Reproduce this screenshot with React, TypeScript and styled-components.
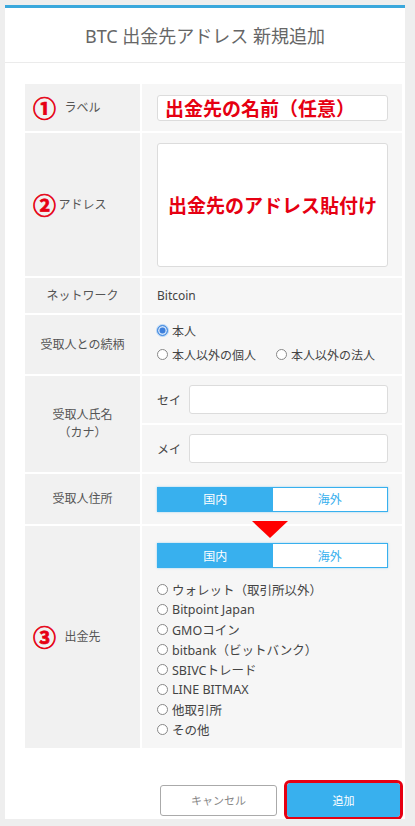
import styled, { createGlobalStyle } from "styled-components";

const GlobalStyle = createGlobalStyle`
    body {
        margin: 0;
        background: #eeeeee;
        font-family: "Noto Sans", "Noto Sans CJK JP", sans-serif;
    }
`;

const Modal = styled.div`
    width: 400px;
    margin: 5px 0 0 5px;
    background: #ffffff;
    border-top: 3px solid #3aa8dc;
    padding-bottom: 2px;
`;

const Header = styled.div`
    height: 54px;
    display: flex;
    align-items: center;
    justify-content: center;
    border-bottom: 1px solid #ebebeb;
    color: #666;
    font-size: 18px;
`;

const Table = styled.div`
    width: 377px;
    margin: 21px 0 0 20px;
    display: flex;
    flex-direction: column;
    gap: 2px;
`;

const Row = styled.div<{ $h: number }>`
    display: grid;
    grid-template-columns: 115px 260px;
    column-gap: 2px;
    height: ${(p) => p.$h}px;
`;

const LabelCell = styled.div`
    position: relative;
    background: #f1f1f1;
    display: flex;
    align-items: center;
    justify-content: center;
    text-align: center;
    color: #555;
    font-size: 12px;
    line-height: 18px;
`;

const Marker = styled.span`
    position: absolute;
    left: 8px;
    top: 50%;
    transform: translateY(-50%);
    color: #e60012;
    font-size: 23px;
    font-weight: 700;
    -webkit-text-stroke: 0.7px #e60012;
`;

const ValueCell = styled.div<{ $top?: boolean }>`
    position: relative;
    background: #f6f6f6;
    display: flex;
    flex-direction: column;
    justify-content: ${(p) => (p.$top ? "flex-start" : "center")};
    padding: 0 14px 0 15px;
    color: #444;
    font-size: 12px;
`;

const TextBox = styled.div<{ $h: number }>`
    height: ${(p) => p.$h}px;
    background: #fff;
    border: 1px solid #dcdcdc;
    border-radius: 3px;
    box-sizing: border-box;
    display: flex;
    align-items: center;
`;

const Hint = styled.span<{ $center?: boolean }>`
    flex: 1;
    text-align: ${(p) => (p.$center ? "center" : "left")};
    padding-left: ${(p) => (p.$center ? "0" : "7px")};
    color: #e60012;
    font-size: 19px;
    font-weight: 700;
    white-space: nowrap;
`;

const RadioLine = styled.div`
    display: flex;
    align-items: center;
    gap: 20px;
    height: 24px;
`;

const RadioItem = styled.label`
    display: flex;
    align-items: center;
    gap: 4px;
    color: #444;
    font-size: 12px;
    white-space: nowrap;
`;

const Dot = styled.span<{ $on?: boolean }>`
    width: 11px;
    height: 11px;
    border-radius: 50%;
    box-sizing: border-box;
    border: 1px solid ${(p) => (p.$on ? "#4a90e2" : "#888")};
    background: ${(p) => (p.$on ? "#3d7fdc" : "#fff")};
    box-shadow: ${(p) => (p.$on ? "inset 0 0 0 1.5px #cfe2f8, 0 0 0 1px #b9d6f5" : "none")};
`;

const NameCell = styled.div`
    display: grid;
    grid-template-rows: 1fr 1fr;
    row-gap: 2px;
    background: #fff;
`;

const NameRow = styled.div`
    background: #f6f6f6;
    display: flex;
    align-items: center;
    padding: 0 14px 0 15px;
    color: #444;
    font-size: 12px;
`;

const NameTag = styled.span`
    width: 32px;
`;

const Toggle = styled.div`
    display: grid;
    grid-template-columns: 1fr 1fr;
    height: 25px;
    border: 1px solid #38b0ee;
    box-sizing: border-box;
    box-shadow: 0 0 2px rgba(56, 176, 238, 0.5);
`;

const ToggleSide = styled.div<{ $on?: boolean }>`
    display: flex;
    align-items: center;
    justify-content: center;
    background: ${(p) => (p.$on ? "#38b0ee" : "#fff")};
    color: ${(p) => (p.$on ? "#fff" : "#38b0ee")};
    font-size: 12px;
`;

const Arrow = styled.span`
    position: absolute;
    top: -5px;
    left: 110px;
    width: 0;
    height: 0;
    border-left: 18px solid transparent;
    border-right: 18px solid transparent;
    border-top: 17px solid #f00;
`;

const DestList = styled.div`
    margin-top: 11px;
    display: flex;
    flex-direction: column;
`;

const DestItem = styled(RadioItem)`
    height: 20px;
    font-size: 12.5px;
`;

const Footer = styled.div`
    display: flex;
    justify-content: flex-end;
    align-items: center;
    gap: 10px;
    padding: 35px 5px 0 0;
`;

const Button = styled.button<{ $primary?: boolean }>`
    width: ${(p) => (p.$primary ? 113 : 117)}px;
    height: ${(p) => (p.$primary ? 34 : 31)}px;
    border-radius: 3px;
    border: 1px solid ${(p) => (p.$primary ? "#38b0ee" : "#aaa")};
    background: ${(p) => (p.$primary ? "#38b0ee" : "#fff")};
    color: ${(p) => (p.$primary ? "#fff" : "#888")};
    font-family: inherit;
    font-size: 11px;
    outline: ${(p) => (p.$primary ? "3px solid #e60012" : "none")};
    outline-offset: 0;
`;

const destinations = [
    "ウォレット（取引所以外）",
    "Bitpoint Japan",
    "GMOコイン",
    "bitbank（ビットバンク）",
    "SBIVCトレード",
    "LINE BITMAX",
    "他取引所",
    "その他",
];

const App = () => {
    return (
        <>
            <GlobalStyle />
            <Modal>
                <Header>BTC 出金先アドレス 新規追加</Header>
                <Table>
                    <Row $h={47}>
                        <LabelCell>
                            <Marker>①</Marker>ラベル
                        </LabelCell>
                        <ValueCell>
                            <TextBox $h={26}>
                                <Hint>出金先の名前（任意）</Hint>
                            </TextBox>
                        </ValueCell>
                    </Row>
                    <Row $h={143}>
                        <LabelCell>
                            <Marker>②</Marker>アドレス
                        </LabelCell>
                        <ValueCell>
                            <TextBox $h={124}>
                                <Hint $center>出金先のアドレス貼付け</Hint>
                            </TextBox>
                        </ValueCell>
                    </Row>
                    <Row $h={35}>
                        <LabelCell>ネットワーク</LabelCell>
                        <ValueCell>Bitcoin</ValueCell>
                    </Row>
                    <Row $h={59}>
                        <LabelCell>受取人との続柄</LabelCell>
                        <ValueCell style={{ paddingBottom: 4 }}>
                            <RadioLine>
                                <RadioItem>
                                    <Dot $on />
                                    本人
                                </RadioItem>
                            </RadioLine>
                            <RadioLine>
                                <RadioItem>
                                    <Dot />
                                    本人以外の個人
                                </RadioItem>
                                <RadioItem>
                                    <Dot />
                                    本人以外の法人
                                </RadioItem>
                            </RadioLine>
                        </ValueCell>
                    </Row>
                    <Row $h={96}>
                        <LabelCell>
                            受取人氏名
                            <br />
                            （カナ）
                        </LabelCell>
                        <NameCell>
                            <NameRow>
                                <NameTag>セイ</NameTag>
                                <TextBox $h={29} style={{ flex: 1 }} />
                            </NameRow>
                            <NameRow>
                                <NameTag>メイ</NameTag>
                                <TextBox $h={29} style={{ flex: 1 }} />
                            </NameRow>
                        </NameCell>
                    </Row>
                    <Row $h={50}>
                        <LabelCell>受取人住所</LabelCell>
                        <ValueCell>
                            <Toggle>
                                <ToggleSide $on>国内</ToggleSide>
                                <ToggleSide>海外</ToggleSide>
                            </Toggle>
                        </ValueCell>
                    </Row>
                    <Row $h={222}>
                        <LabelCell>
                            <Marker>③</Marker>出金先
                        </LabelCell>
                        <ValueCell $top style={{ paddingTop: 17 }}>
                            <Arrow />
                            <Toggle>
                                <ToggleSide $on>国内</ToggleSide>
                                <ToggleSide>海外</ToggleSide>
                            </Toggle>
                            <DestList>
                                {destinations.map((d) => (
                                    <DestItem key={d}>
                                        <Dot />
                                        {d}
                                    </DestItem>
                                ))}
                            </DestList>
                        </ValueCell>
                    </Row>
                </Table>
                <Footer>
                    <Button>キャンセル</Button>
                    <Button $primary>追加</Button>
                </Footer>
            </Modal>
        </>
    );
};

export default App;
